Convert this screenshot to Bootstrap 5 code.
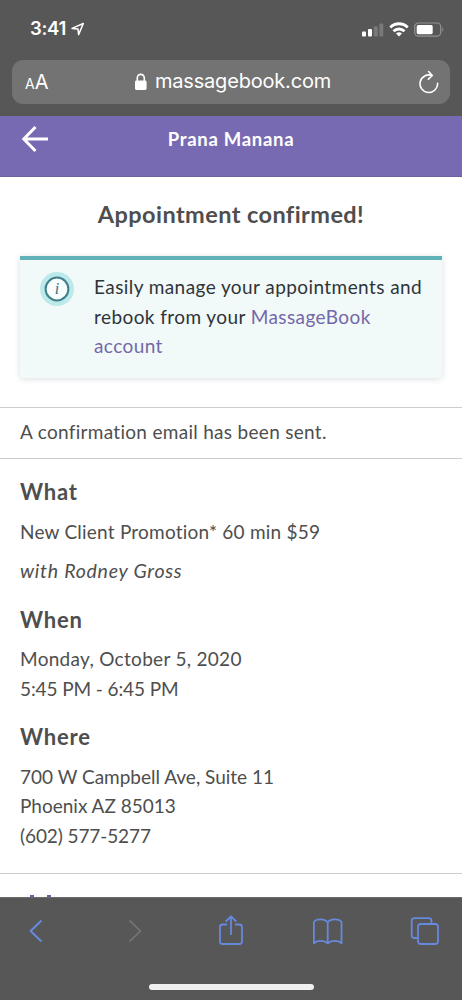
<!DOCTYPE html>
<html lang="en">
<head>
<meta charset="utf-8">
<meta name="viewport" content="width=device-width, initial-scale=1">
<title>Appointment confirmed</title>
<link rel="stylesheet" href="https://cdn.jsdelivr.net/npm/bootstrap@5.3.0/dist/css/bootstrap.min.css">
<style>
body{font-family:Lato,sans-serif;font-size:19px;line-height:29.6px;letter-spacing:.3px;color:#4e4e4e;height:1000px;overflow:hidden;background:#fff}
.chrome{background:#575757;color:#fff;font-family:Inter,sans-serif;letter-spacing:0}
.top-chrome{height:116px}
.status{height:60px;padding:0 18px 3px 30px}
.clock{font-size:18.5px;font-weight:600;letter-spacing:-.3px}
.pointer{margin-left:5px}
.address{height:44px;margin:0 12px;background:#737373;border-radius:11px;padding:0 11px 0 13px}
.aa{font-size:20px;width:22px;padding-top:2px}
.aa small{font-size:14px}
.site{font-size:20px;letter-spacing:-.18px}
.app-bar{height:61px;background:#786ab2;border-bottom:1px solid #6c619f;color:#fff;padding:0 21px}
.app-title{font-size:18.5px;font-weight:700;line-height:47px;letter-spacing:.7px}
.page{height:720px;overflow:hidden}
h1{font-size:23.5px;font-weight:700;line-height:32px;margin:21px 0 26px;letter-spacing:.42px;color:#4e4e4e}
h2{font-size:22px;font-weight:700;line-height:30px;margin:0 0 9.5px;letter-spacing:.8px}
.notice{margin:0 20px;height:122px;background:#f1f9f9;border-top:4px solid #5fb2b8;box-shadow:0 1px 6px rgba(40,50,80,.16);padding:12px 0 0 20px;color:#2f3438;border-radius:0 0 3px 3px}
.notice p{margin:0 0 0 20px;letter-spacing:.42px}
.notice a{color:#7468a8;text-decoration:none}
.sent{margin-top:29px;height:52px;border:solid #cdcdcd;border-width:1px 0;padding:9px 20px 0}
.details{padding:18px 20px 0;height:414px}
.details p{margin:0 0 10px}
.details h2.later{margin-top:19px}
.service{letter-spacing:.22px}
.figures{letter-spacing:0}
.tight{letter-spacing:-.1px}
.therapist{font-size:19.5px;letter-spacing:.75px}
.rule{border-top:1px solid #cdcdcd;height:24px;padding:0 28px}
.tools{height:103px;color:#6789dd;border-top:1px solid #6b6b6b}
.home{width:165px;height:6px;border-radius:3px;background:#efefef}
svg{display:block;flex:none}
</style>
</head>
<body class="d-flex flex-column">
<header class="chrome top-chrome flex-shrink-0">
  <div class="status d-flex align-items-center justify-content-between">
    <div class="d-flex align-items-center">
      <span class="clock">3:41</span>
      <svg class="pointer" width="14" height="14" viewBox="0 0 14 14" fill="none" stroke="#fff" stroke-width="1.5" stroke-linejoin="round"><path d="M1 6.4 12.3 1.5 7.6 12.6 7 7Z"/></svg>
    </div>
    <svg width="84" height="16" viewBox="0 0 84 16">
      <g fill="#fff"><rect x="2" y="10.5" width="4" height="5" rx="1"/><rect x="8" y="8" width="4" height="7.5" rx="1"/></g>
      <g fill="#797979"><rect x="13.8" y="5.3" width="4" height="10.2" rx="1"/><rect x="19.3" y="2.5" width="4" height="13" rx="1"/></g>
      <g fill="none" stroke="#fff" stroke-width="2.8"><path d="M30.3 6.400a12.200 12.200 0 0 1 17.400 0M33.500 10.200a8 8 0 0 1 11 0"/></g>
      <path d="M39 15.6l-3-3a4.3 4.3 0 0 1 6 0z" fill="#fff"/>
      <rect x="54.7" y="2" width="26" height="13.2" rx="3.6" fill="none" stroke="#929292" stroke-width="1.2"/>
      <rect x="56.7" y="4" width="16" height="9.2" rx="1.6" fill="#fff"/><path d="M82.2 6.5c1.5.7 1.5 3.5 0 4.2z" fill="#929292"/>
    </svg>
  </div>
  <div class="address d-flex align-items-center justify-content-between">
    <span class="aa text-nowrap"><small>A</small>A</span>
    <div class="d-flex align-items-center">
      <svg width="12" height="18" viewBox="0 0 12 18"><rect y="7.5" width="11.6" height="9.5" rx="1.4" fill="#fff"/><path d="M2.3 8V4.9a3.5 3.5 0 0 1 7 0V8" fill="none" stroke="#fff" stroke-width="1.6"/></svg>
      <span class="site ms-2">massagebook.com</span>
    </div>
    <svg width="20" height="24" viewBox="0 0 20 24" fill="none" stroke="#fff" stroke-width="1.6" stroke-linecap="round" stroke-linejoin="round"><path d="M18.6 13.2A8.8 8.8 0 1 1 13 5.500M9.600 1.500 13.300 5.500 9.400 9.200"/></svg>
  </div>
</header>
<nav class="app-bar flex-shrink-0 d-flex justify-content-between">
  <svg class="mt-2" width="28" height="30" viewBox="0 0 28 30" fill="none" stroke="#fff" stroke-width="3"><path d="M27 15H3M14.5 3 2.8 15l11.7 12"/></svg>
  <span class="app-title">Prana Manana</span>
  <span style="width:28px"></span>
</nav>
<main class="page">
  <h1 class="text-center">Appointment confirmed!</h1>
  <section class="notice d-flex align-items-start">
    <svg width="34" height="34" viewBox="0 0 34 34"><circle cx="17" cy="17" r="17" fill="#bce9e9"/><circle cx="17" cy="17" r="11.4" fill="#f8fdfd" stroke="#3f7f8a" stroke-width="2"/><text x="17" y="22" text-anchor="middle" font-family="Liberation Serif,serif" font-style="italic" font-size="16" letter-spacing="0" fill="#3f6f7a">i</text></svg>
    <p class="text-nowrap">Easily manage your appointments and<br>rebook from your <a href="#">MassageBook<br>account</a></p>
  </section>
  <section class="sent">A confirmation email has been sent.</section>
  <section class="details">
    <h2>What</h2>
    <p class="service">New Client Promotion* 60 min $59</p>
    <p class="fst-italic therapist">with Rodney Gross</p>
    <h2 class="later">When</h2>
    <p>Monday, October 5, 2020<br><span class="tight">5:45 PM - 6:45 PM</span></p>
    <h2 class="later">Where</h2>
    <p class="figures">700 W Campbell Ave, Suite 11<br>Phoenix AZ 85013<br><span class="tight">(602) 577-5277</span></p>
  </section>
  <div class="rule d-flex align-items-end"><svg width="26" height="3" viewBox="0 0 26 3" fill="#6460a4"><path d="M2 1h4v2H2zM19 1h4v2h-4z"/></svg></div>
</main>
<footer class="chrome tools flex-shrink-0 d-flex flex-column align-items-center">
  <svg width="462" height="70" viewBox="0 898 462 70" fill="none" stroke="currentColor" stroke-width="1.8" stroke-linejoin="round">
    <path d="M41.5 920.5 30.5 931l11 10.5" stroke-width="2"/>
    <path d="M129.5 920.5l11 10.5-11 10.5" stroke="#777" stroke-width="1.7"/>
    <path d="M227 924.5h-4.500a2.500 2.500 0 0 0-2.500 2.500v14.500a2.500 2.500 0 0 0 2.500 2.500h17a2.500 2.500 0 0 0 2.500-2.500V927a2.500 2.500 0 0 0-2.500-2.500H235M231 935V916.500M225.800 921.500l5.200-5.200 5.200 5.200"/>
    <path d="M327.700 922.500c-2.500-4-11.500-4-13.800-.5v21.300c3-3.200 10.500-3.200 13.800 0 3.300-3.200 10.800-3.200 13.800 0V922c-2.300-3.500-11.300-3.500-13.800.5zV943"/>
    <path d="M418 938h-3.500a2.800 2.800 0 0 1-2.800-2.800V921a2.800 2.800 0 0 1 2.800-2.800h14.200a2.800 2.800 0 0 1 2.800 2.800v2.800"/><rect x="418" y="924" width="20" height="20" rx="2.8"/>
  </svg>
  <div class="home mt-3"></div>
</footer>
<script src="https://cdn.jsdelivr.net/npm/bootstrap@5.3.0/dist/js/bootstrap.bundle.min.js"></script>
</body>
</html>
